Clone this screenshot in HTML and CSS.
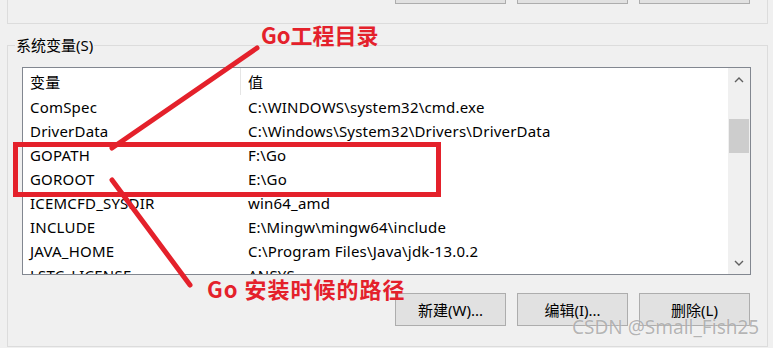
FILE: index.html
```html
<!DOCTYPE html>
<html lang="zh-CN">
<head>
    <meta charset="UTF-8">
    <title>系统变量</title>
    <link rel="stylesheet" href="styles.css">
</head>
<body>
    <div class="dialog">
        <div class="group group-top">
            <div class="btn-row btn-row-top">
                <button class="btn"></button>
                <button class="btn"></button>
                <button class="btn"></button>
            </div>
        </div>

        <div class="group group-sys">
            <span class="group-title">系统变量(S)</span>

            <div class="listview">
                <div class="lv-main">
                    <div class="lv-row lv-head">
                        <div class="lv-cell lv-name">变量</div>
                        <div class="lv-cell lv-value">值</div>
                    </div>
                    <div class="lv-row">
                        <div class="lv-cell lv-name">ComSpec</div>
                        <div class="lv-cell lv-value">C:\WINDOWS\system32\cmd.exe</div>
                    </div>
                    <div class="lv-row">
                        <div class="lv-cell lv-name">DriverData</div>
                        <div class="lv-cell lv-value">C:\Windows\System32\Drivers\DriverData</div>
                    </div>
                    <div class="lv-row">
                        <div class="lv-cell lv-name">GOPATH</div>
                        <div class="lv-cell lv-value">F:\Go</div>
                    </div>
                    <div class="lv-row">
                        <div class="lv-cell lv-name">GOROOT</div>
                        <div class="lv-cell lv-value">E:\Go</div>
                    </div>
                    <div class="lv-row">
                        <div class="lv-cell lv-name">ICEMCFD_SYSDIR</div>
                        <div class="lv-cell lv-value">win64_amd</div>
                    </div>
                    <div class="lv-row">
                        <div class="lv-cell lv-name">INCLUDE</div>
                        <div class="lv-cell lv-value">E:\Mingw\mingw64\include</div>
                    </div>
                    <div class="lv-row">
                        <div class="lv-cell lv-name">JAVA_HOME</div>
                        <div class="lv-cell lv-value">C:\Program Files\Java\jdk-13.0.2</div>
                    </div>
                    <div class="lv-row">
                        <div class="lv-cell lv-name">LSTC_LICENSE</div>
                        <div class="lv-cell lv-value">ANSYS</div>
                    </div>
                </div>
                <div class="lv-scroll">
                    <div class="sb-arrow">
                        <svg width="10" height="6" viewBox="0 0 10 6"><path d="M1 5 L5 1 L9 5" fill="none" stroke="#606060" stroke-width="1.4"/></svg>
                    </div>
                    <div class="sb-track">
                        <div class="sb-thumb"></div>
                    </div>
                    <div class="sb-arrow">
                        <svg width="10" height="6" viewBox="0 0 10 6"><path d="M1 1 L5 5 L9 1" fill="none" stroke="#606060" stroke-width="1.4"/></svg>
                    </div>
                </div>
            </div>

            <div class="btn-row">
                <button class="btn">新建(W)...</button>
                <button class="btn">编辑(I)...</button>
                <button class="btn">删除(L)</button>
            </div>
        </div>

        <!-- annotations drawn on top of the screenshot -->
        <svg class="marks" width="773" height="348" viewBox="0 0 773 348">
            <line x1="112" y1="148" x2="257" y2="48" />
            <line x1="112" y1="180" x2="190" y2="285" />
        </svg>
        <div class="mark-box"></div>
        <div class="note note-top">Go工程目录</div>
        <div class="note note-bottom">Go 安装时候的路径</div>
        <div class="watermark">CSDN @Small_Fish25</div>
    </div>
</body>
</html>
```

FILE: styles.css
```css
:root {
    --face: #f0f0f0;
    --group-line: #dcdcdc;
    --mark-red: #e4212b;
}

* {
    margin: 0;
    padding: 0;
    box-sizing: border-box;
}

body {
    background: var(--face);
    font-family: "Noto Sans", "Noto Sans CJK SC", sans-serif;
    font-size: 15px;
    color: #000;
}

.dialog {
    position: relative;
    width: 773px;
    height: 348px;
    overflow: hidden;
    padding: 0 5px 0 7px;
}

.group {
    border: 1px solid var(--group-line);
}

.group-top {
    display: flow-root;
    border-top: none;
    height: 24px;
}

.btn-row {
    display: flex;
    justify-content: flex-end;
    gap: 11px;
    padding-right: 1px;
}

.btn-row-top {
    margin-top: -28px;
    padding-right: 17px;
}

.btn {
    width: 111px;
    height: 33px;
    background: #e1e1e1;
    border: 1px solid #adadad;
    font: inherit;
    color: #000;
}

.btn-row-top .btn {
    height: 32px;
}

.group-sys {
    position: relative;
    margin-top: 21px;
    height: 302px;
    padding: 21px 16px 0 14px;
}

.group-title {
    position: absolute;
    top: -12px;
    left: 7px;
    padding: 0 1px;
    background: var(--face);
    line-height: 22px;
}

.listview {
    display: flex;
    height: 208px;
    border: 1px solid #828790;
    background: #fff;
    margin-bottom: 18px;
}

.lv-main {
    flex: 1;
    overflow: hidden;
    letter-spacing: 0.2px;
}

.lv-row {
    display: flex;
    height: 24px;
    line-height: 24px;
    white-space: nowrap;
}

.lv-head {
    height: 27px;
    line-height: 28px;
}

.lv-name {
    width: 218px;
    padding-left: 7px;
}

.lv-head .lv-name {
    border-right: 1px solid #e5e5e5;
}

.lv-value {
    padding-left: 7px;
}

.lv-scroll {
    width: 22px;
    display: flex;
    flex-direction: column;
    background: var(--face);
}

.sb-arrow {
    height: 23px;
    display: flex;
    align-items: center;
    justify-content: center;
}

.sb-track {
    flex: 1;
    padding: 28px 1px 0;
}

.sb-thumb {
    height: 34px;
    background: #cdcdcd;
}

.marks {
    position: absolute;
    left: 0;
    top: 0;
}

.marks line {
    stroke: var(--mark-red);
    stroke-width: 5;
    stroke-linecap: round;
}

.mark-box {
    position: absolute;
    left: 13px;
    top: 142px;
    width: 428px;
    height: 55px;
    border: 5px solid var(--mark-red);
}

.note {
    position: absolute;
    color: var(--mark-red);
    font-family: "Noto Sans CJK SC", sans-serif;
    font-size: 22px;
    font-weight: bold;
    line-height: 26px;
}

.note-top {
    left: 261px;
    top: 21px;
}

.note-bottom {
    left: 207px;
    top: 275px;
    letter-spacing: 1px;
}

.watermark {
    position: absolute;
    left: 572px;
    top: 314px;
    font-family: "Noto Sans", sans-serif;
    font-size: 19px;
    color: rgba(120, 120, 120, 0.55);
    text-shadow: 0 0 1px rgba(255, 255, 255, 0.8);
}
```
